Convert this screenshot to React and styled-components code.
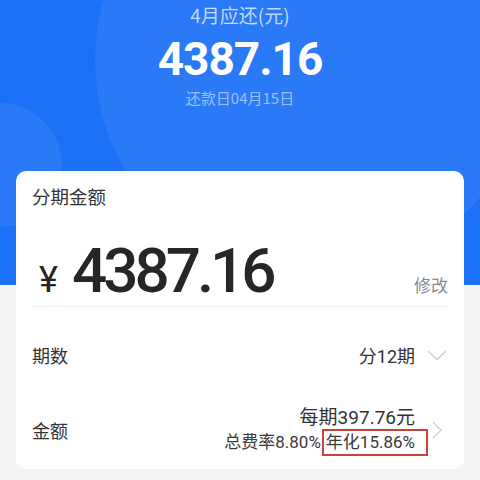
import styled, { createGlobalStyle } from "styled-components";

const GlobalStyle = createGlobalStyle`
  * {
    box-sizing: border-box;
  }
  body {
    margin: 0;
    background-color: #f4f4f5;
    font-family: Roboto, "Noto Sans CJK SC", sans-serif;
  }
`;

const Page = styled.main`
  width: 480px;
  height: 480px;
  overflow: hidden;
  background-color: #f4f4f5;
`;

const Hero = styled.section`
  position: relative;
  height: 285px;
  padding-top: 2px;
  overflow: hidden;
  display: flex;
  flex-direction: column;
  align-items: center;
  background-color: #1b70f6;
`;

const Bubble = styled.div`
  position: absolute;
  border-radius: 50%;
  background-color: rgba(255, 255, 255, 0.065);
  left: ${(props) => props.left}px;
  top: ${(props) => props.top}px;
  width: ${(props) => props.size}px;
  height: ${(props) => props.size}px;
`;

const HeroLabel = styled.p`
  position: relative;
  margin: 0;
  font-size: 19px;
  line-height: 26px;
  color: rgba(255, 255, 255, 0.72);
  font-family: "Noto Sans CJK SC", sans-serif;
`;

const HeroAmount = styled.p`
  position: relative;
  margin: 4px 0 0;
  font-size: 46px;
  line-height: 54px;
  font-weight: 700;
  letter-spacing: -1px;
  color: #ffffff;
  font-family: Roboto, sans-serif;
`;

const HeroDate = styled.p`
  position: relative;
  margin: 2px 0 0;
  font-size: 15px;
  line-height: 20px;
  color: rgba(255, 255, 255, 0.55);
  font-family: "Noto Sans CJK SC", sans-serif;
`;

const Card = styled.section`
  position: relative;
  margin: -114px 16px 0;
  padding: 12px 16px 0;
  height: 298px;
  border-radius: 10px;
  background-color: #ffffff;
`;

const CardTitle = styled.p`
  margin: 0;
  font-size: 18.5px;
  line-height: 26px;
  color: #333333;
  font-family: "Noto Sans CJK SC", sans-serif;
`;

const AmountRow = styled.div`
  margin-top: 26px;
  height: 72px;
  display: flex;
  align-items: baseline;
  justify-content: space-between;
  border-bottom: 1px solid #f0f0f0;
`;

const AmountValue = styled.div`
  display: flex;
  align-items: baseline;
  padding-left: 7px;
  color: #262626;
`;

const Currency = styled.span`
  font-size: 36px;
  line-height: 72px;
  margin-right: 14px;
  font-family: Roboto, sans-serif;
`;

const BigNumber = styled.span`
  font-size: 62px;
  line-height: 72px;
  font-weight: 500;
  letter-spacing: -4px;
  font-family: Roboto, sans-serif;
`;

const EditLink = styled.span`
  font-size: 17px;
  color: #858a96;
  font-family: "Noto Sans CJK SC", sans-serif;
`;

const Row = styled.div`
  display: flex;
  align-items: center;
  justify-content: space-between;
  height: ${(props) => props.height}px;
  padding-top: ${(props) => props.padTop || 0}px;
  padding-bottom: ${(props) => props.padBottom || 0}px;
`;

const RowLabel = styled.span`
  font-size: 18px;
  color: #333333;
  font-family: "Noto Sans CJK SC", sans-serif;
`;

const RowRight = styled.div`
  display: flex;
  align-items: center;
`;

const RowValue = styled.span`
  font-size: 18px;
  color: #333333;
  font-family: Roboto, "Noto Sans CJK SC", sans-serif;
`;

const ValueStack = styled.div`
  display: flex;
  flex-direction: column;
  align-items: flex-end;
`;

const MainLine = styled.span`
  font-size: 19px;
  line-height: 25px;
  color: #333333;
  font-family: Roboto, "Noto Sans CJK SC", sans-serif;
`;

const SubLine = styled.span`
  font-size: 17px;
  line-height: 25px;
  color: #3a3a3a;
  font-family: Roboto, "Noto Sans CJK SC", sans-serif;
`;

const Highlight = styled.span`
  position: relative;
  margin-left: 5px;

  &::after {
    content: "";
    position: absolute;
    left: -4px;
    right: -13px;
    top: -3px;
    bottom: -4px;
    border: 2px solid #c4443a;
  }
`;

const ArrowSlot = styled.span`
  width: 22px;
  margin-left: 11px;
  display: flex;
  align-items: center;
  justify-content: center;
`;

const ChevronDown = () => (
  <svg width="20" height="11" viewBox="0 0 20 11" fill="none">
    <path d="M1 1 L10 9.5 L19 1" stroke="#cfcfcf" strokeWidth="1.4" />
  </svg>
);

const ChevronRight = () => (
  <svg width="10" height="18" viewBox="0 0 10 18" fill="none">
    <path d="M1 1 L9 9 L1 17" stroke="#cfcfcf" strokeWidth="1.4" />
  </svg>
);

const App = () => {
  return (
    <Page>
      <GlobalStyle />
      <Hero>
        <Bubble left={95} top={-157} size={434} />
        <Bubble left={-62} top={103} size={124} />
        <HeroLabel>{"4月应还(元)"}</HeroLabel>
        <HeroAmount>{"4387.16"}</HeroAmount>
        <HeroDate>{"还款日04月15日"}</HeroDate>
      </Hero>
      <Card>
        <CardTitle>{"分期金额"}</CardTitle>
        <AmountRow>
          <AmountValue>
            <Currency>{"¥"}</Currency>
            <BigNumber>{"4387.16"}</BigNumber>
          </AmountValue>
          <EditLink>{"修改"}</EditLink>
        </AmountRow>
        <Row height={96}>
          <RowLabel>{"期数"}</RowLabel>
          <RowRight>
            <RowValue>{"分12期"}</RowValue>
            <ArrowSlot>
              <ChevronDown />
            </ArrowSlot>
          </RowRight>
        </Row>
        <Row height={66} padTop={2} padBottom={14}>
          <RowLabel>{"金额"}</RowLabel>
          <RowRight>
            <ValueStack>
              <MainLine>{"每期397.76元"}</MainLine>
              <SubLine>
                {"总费率8.80%"}
                <Highlight>{"年化15.86%"}</Highlight>
              </SubLine>
            </ValueStack>
            <ArrowSlot>
              <ChevronRight />
            </ArrowSlot>
          </RowRight>
        </Row>
      </Card>
    </Page>
  );
};

export default App;
